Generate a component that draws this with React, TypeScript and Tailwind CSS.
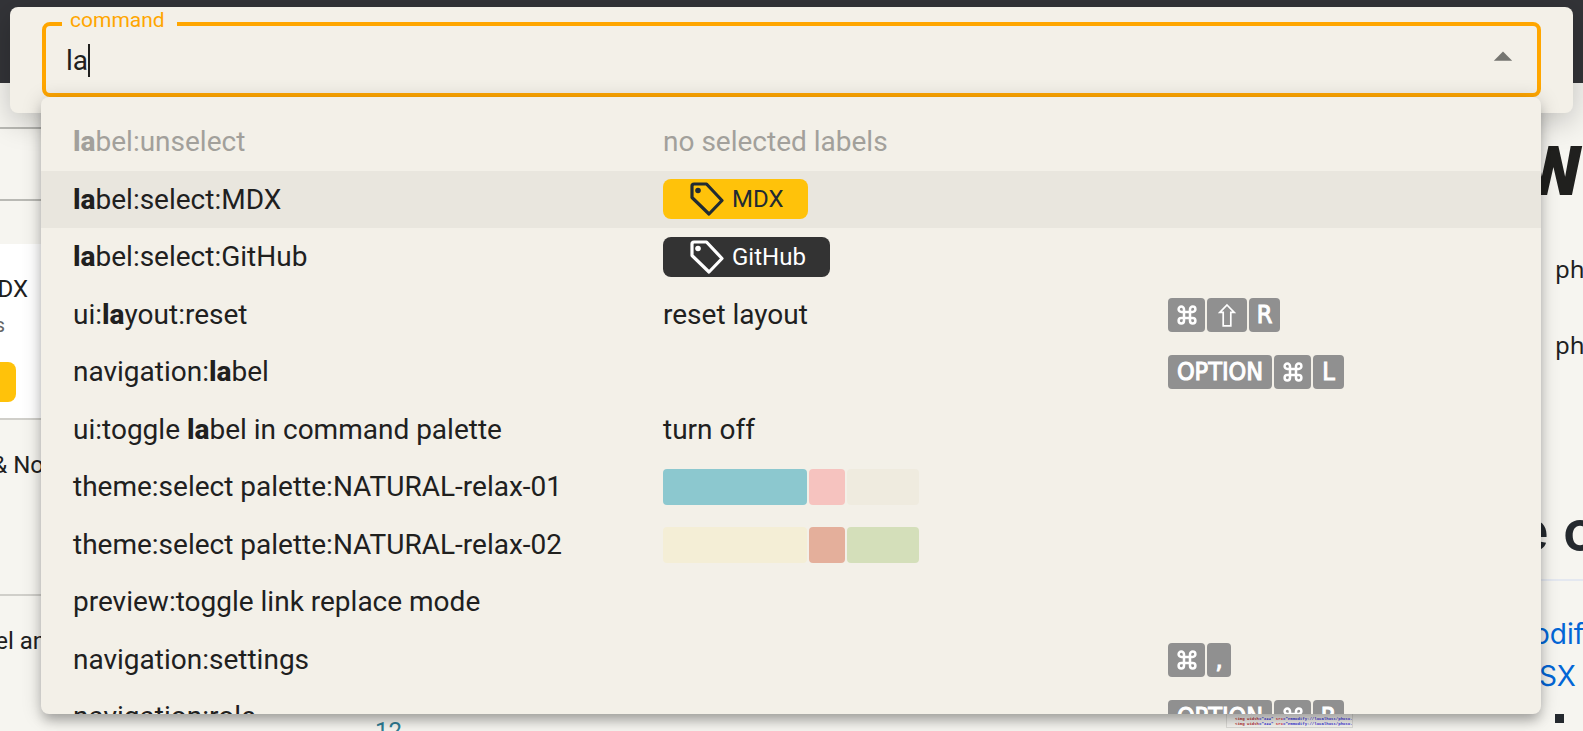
import type { ReactNode } from "react";
import { MdArrowDropUp } from "react-icons/md";

function CommandGlyph() {
  return (
    <svg viewBox="0 0 20 20" className="h-5 w-5" fill="none" stroke="currentColor" strokeWidth="2.500" aria-label="command">
      <path d="M7 7V4.300A2.700 2.700 0 1 0 4.300 7H15.700A2.700 2.700 0 1 0 13 4.300V15.700A2.700 2.700 0 1 0 15.700 13H4.300A2.700 2.700 0 1 0 7 15.700V7" />
    </svg>
  );
}

function ShiftGlyph() {
  return (
    <svg viewBox="0 0 18 24" className="h-6 w-[18px]" fill="none" stroke="currentColor" strokeWidth="1.700" aria-label="shift">
      <path d="M9 2L16.2 9.4H12.8V22.8H5.2V9.4H1.8Z" />
    </svg>
  );
}

function TagIcon() {
  return (
    <svg viewBox="0 0 34 34" className="h-[34px] w-[34px]" fill="none" stroke="currentColor" strokeWidth="3.200" strokeLinejoin="round" aria-hidden="true">
      <path d="M2 4Q2 2 4 2H16.5L32 18.5L19 32L2 15.5Z" />
      <circle cx="8" cy="8.500" r="2.800" fill="currentColor" stroke="none" />
    </svg>
  );
}

function Key({ children, width }: { children: ReactNode; width: string }) {
  return (
    <kbd className={`flex h-[34px] items-center justify-center rounded bg-[#909090] font-['DejaVu_Sans_Condensed','Noto_Sans',sans-serif] text-[25px] text-white ${width}`}>
      {children}
    </kbd>
  );
}

function KeyText({ children }: { children: string }) {
  return <span className="[-webkit-text-stroke:1px_white]">{children}</span>;
}

const cmd = <Key width="w-[37px]"><CommandGlyph /></Key>;
const option = <Key width="w-[104px]"><KeyText>OPTION</KeyText></Key>;

function Chip({ label, tone }: { label: string; tone: string }) {
  return (
    <span className={`mb-px flex h-10 items-center gap-2 rounded-lg pr-6 pl-[27px] text-2xl ${tone}`}>
      <TagIcon />
      {label}
    </span>
  );
}

function Swatches({ colors }: { colors: [string, string, string] }) {
  return (
    <span className="flex gap-0.5">
      <span className={`h-9 w-36 rounded ${colors[0]}`} />
      <span className={`h-9 w-9 rounded ${colors[1]}`} />
      <span className={`h-9 w-[72px] rounded ${colors[2]}`} />
    </span>
  );
}

type Command = { name: ReactNode; detail?: ReactNode; keys?: ReactNode; state?: "disabled" | "active" };

const la = <b className="font-extrabold">la</b>;

const commands: Command[] = [
  { name: <>{la}bel:unselect</>, detail: "no selected labels", state: "disabled" },
  { name: <>{la}bel:select:MDX</>, detail: <Chip label="MDX" tone="bg-[#ffc20a] text-[#212b33]" />, state: "active" },
  { name: <>{la}bel:select:GitHub</>, detail: <Chip label="GitHub" tone="bg-[#333333] text-white" /> },
  {
    name: <>ui:{la}yout:reset</>,
    detail: "reset layout",
    keys: <>{cmd}<Key width="w-10"><ShiftGlyph /></Key><Key width="w-[31px]"><KeyText>R</KeyText></Key></>,
  },
  { name: <>navigation:{la}bel</>, keys: <>{option}{cmd}<Key width="w-[31px]"><KeyText>L</KeyText></Key></> },
  { name: <>ui:toggle {la}bel in command palette</>, detail: "turn off" },
  { name: "theme:select palette:NATURAL-relax-01", detail: <Swatches colors={["bg-[#8cc8cf]", "bg-[#f6c3bf]", "bg-[#efebdf]"]} /> },
  { name: "theme:select palette:NATURAL-relax-02", detail: <Swatches colors={["bg-[#f4eed6]", "bg-[#e4af9b]", "bg-[#d4dfba]"]} /> },
  { name: "preview:toggle link replace mode" },
  { name: "navigation:settings", keys: <>{cmd}<Key width="w-6"><KeyText>,</KeyText></Key></> },
  { name: "navigation:role", keys: <>{option}{cmd}<Key width="w-[31px]"><KeyText>R</KeyText></Key></> },
];

function NoteList() {
  return (
    <aside className="w-[500px] shrink-0 text-2xl leading-8">
      <div className="h-[46px] border-b-2 border-[#b9b9b4]" />
      <div className="h-[72px] border-b-2 border-[#b9b9b4]" />
      <div className="mt-[43px] flex h-44 flex-col border-b-2 border-[#d0cfca] bg-white pt-[29px]">
        <p className="flex w-7 justify-end">MDX</p>
        <p className="mt-1 flex w-[5px] justify-end text-[21px] text-[#666666]">s</p>
        <span className="mt-[21px] h-10 w-4 rounded-r-lg bg-[#ffc20a]" />
      </div>
      <div className="h-44 border-b-2 border-[#d0cfca] pt-[29px]">
        <p className="flex w-11 justify-end whitespace-nowrap">&amp; No</p>
      </div>
      <div className="pt-[29px]">
        <p className="flex w-[46px] justify-end whitespace-nowrap">el an</p>
      </div>
      <p className="mt-[58px] pl-[375px] text-[#2f7d95]">12</p>
    </aside>
  );
}

function Preview() {
  return (
    <article className="flex grow flex-col overflow-hidden">
      <div className="flex h-[630px] flex-col items-end">
        <h1 className="mt-[49px] text-[68px] leading-20 font-black">W</h1>
        <p className="mt-[39px] w-7 font-['Noto_Sans',sans-serif] text-2xl leading-9">ph</p>
        <p className="mt-10 w-7 font-['Noto_Sans',sans-serif] text-2xl leading-9">ph</p>
        <div className="mt-[136px] flex w-full justify-end border-b-2 border-[#e4e8f0] pb-4 text-[#24292e]">
          <h2 className="-mr-3.5 font-[Inter,sans-serif] text-[56px] leading-16 font-semibold">e o</h2>
        </div>
        <a href="#modify" className="mt-8 w-[50px] font-[Inter,sans-serif] text-[28px] leading-[42px] text-[#0366d6]">
          odif
          <span className="block pl-1.5">SX</span>
        </a>
      </div>
      <div className="flex items-start">
        <pre className="ml-[726px] w-[127px] overflow-hidden border border-[#deddd8] bg-[#f8f7f3] pt-[3px] pl-2 font-['Liberation_Mono',monospace] text-[4px] leading-[5px] font-bold text-[#3a35dd]">
          <span className="text-[#b5252d]">&lt;img width</span>="324" <span className="text-[#e0303a]">src</span>="emmodify://localhost/photo-1524474959"{"\n"}
          <span className="text-[#b5252d]">&lt;img width</span>="324" <span className="text-[#e0303a]">src</span>="emmodify://localhost/photo-1633380557"
        </pre>
        <span className="mt-px ml-[202px] h-[9px] w-[9px] bg-[#24292e]" />
      </div>
    </article>
  );
}

export default function App() {
  return (
    <main className="relative h-screen overflow-hidden bg-[#f6f5f0] font-[Roboto,sans-serif] text-[#20201e]">
      <header className="h-[83px] bg-[#333438]" />
      <div className="flex">
        <NoteList />
        <Preview />
      </div>

      <section className="absolute inset-x-[10px] top-[7px] rounded-lg bg-[#f3f0e8] px-8 pt-[3px] pb-4 shadow-[0_8px_30px_rgba(0,0,0,0.22)]">
        <fieldset className="h-[87px] rounded-lg border-4 border-[#ffa600] pl-4">
          <legend className="pr-3 pb-2 pl-2 text-[21px] leading-5 text-[#ffa600]">
            <label htmlFor="command">command</label>
          </legend>
          <div className="flex h-full items-center pb-[10px] pl-1">
            <input id="command" defaultValue="la" autoComplete="off" className="[field-sizing:content] bg-transparent text-[28px] leading-8 outline-none" />
            <span className="h-[33px] w-0.5 bg-[#20201e]" />
            <button type="button" aria-label="Close" className="mr-3 mb-2 ml-auto text-[#757570]">
              <MdArrowDropUp size={44} />
            </button>
          </div>
        </fieldset>
        <ul
          role="listbox"
          aria-label="Commands"
          className="absolute inset-x-8 top-[90px] -ml-px h-[617px] overflow-hidden rounded-lg bg-[#f3f0e8] pt-4 text-[28px] leading-8 shadow-[0_8px_12px_-2px_rgba(0,0,0,0.26),0_2px_20px_rgba(0,0,0,0.18)]"
        >
          {commands.map((c, i) => (
            <li
              key={i}
              role="option"
              aria-selected={c.state === "active"}
              className={`grid h-[58px] grid-cols-[590fr_505fr_341fr] items-center px-8 whitespace-nowrap even:h-[57px] ${
                c.state === "active" ? "bg-[#e9e6de]" : c.state === "disabled" ? "text-[#a2a09b]" : ""
              }`}
            >
              <span>{c.name}</span>
              <span className="flex">{c.detail}</span>
              <span className="flex gap-0.5">{c.keys}</span>
            </li>
          ))}
        </ul>
      </section>
    </main>
  );
}
